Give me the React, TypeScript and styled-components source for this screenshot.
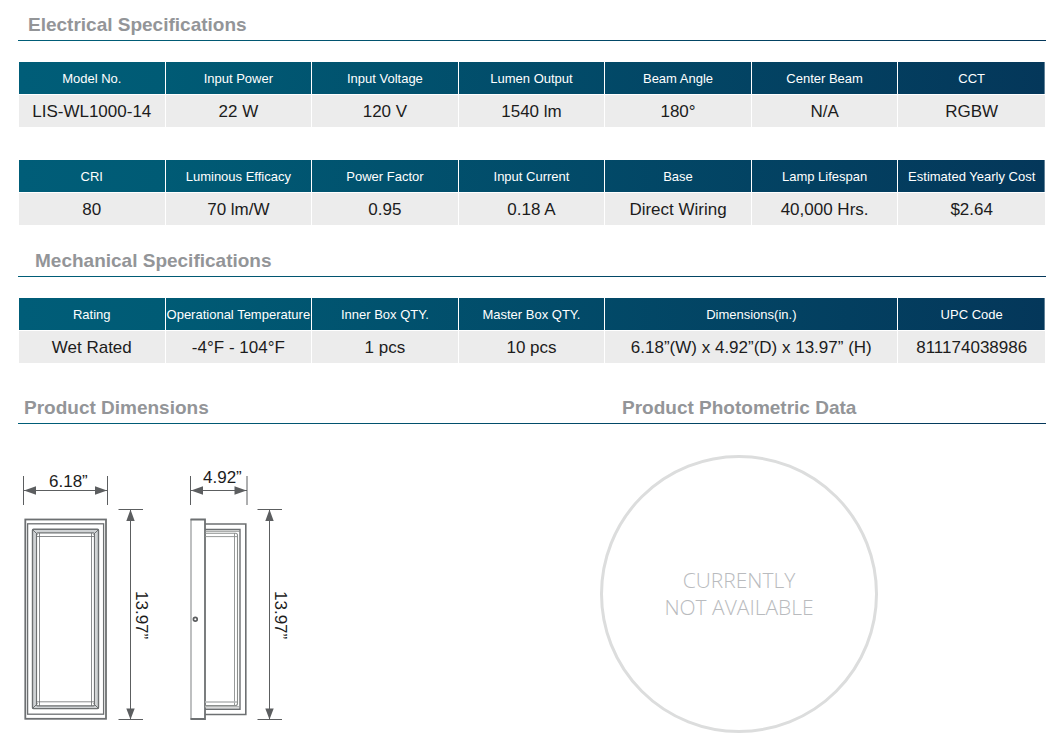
import React from "react";
import styled, { createGlobalStyle } from "styled-components";

const FONT = `"Liberation Sans", Arial, Helvetica, sans-serif`;
const GRADIENT = "linear-gradient(to right, #005d78, #005b75 14%, #04375a)";

const GlobalStyle = createGlobalStyle`
  body {
    margin: 0;
    background: #fff;
    color: #1c1c1c;
    font-family: ${FONT};
  }
`;

const Page = styled.main`
  padding: 13px 16px 19px 18px;
`;

const TitleBar = styled.header<{ $top?: number }>`
  display: grid;
  grid-template-columns: 582fr 446fr;
  margin-top: ${(p) => p.$top ?? 0}px;
  padding-bottom: 3px;
  border-bottom: 1px solid;
  border-image: ${GRADIENT} 1;
`;

const Title = styled.h2<{ $indent: number }>`
  margin: 0;
  padding-left: ${(p) => p.$indent}px;
  color: #939598;
  font-size: 19px;
  font-weight: 700;
  line-height: 24px;
  white-space: nowrap;
`;

const Tables = styled.div`
  display: flex;
  flex-direction: column;
  gap: 33px;
  padding: 21px 1px 0;
`;

const Table = styled.table`
  width: 100%;
  table-layout: fixed;
  border-collapse: separate;
  border-spacing: 0;
  text-align: center;
`;

const HeadRow = styled.tr`
  background: ${GRADIENT};
`;

const HeadCell = styled.th`
  height: 30px;
  padding: 2px 0 0;
  border-bottom: 1px solid #fff;
  color: #fff;
  font-size: 13px;
  font-weight: 400;
  line-height: 16px;
  white-space: nowrap;

  &:not(:last-child) {
    border-right: 1px solid #fff;
  }
`;

const Cell = styled.td`
  height: 30px;
  padding: 2px 0 0;
  background: #ececec;
  font-size: 17px;
  line-height: 20px;
  white-space: nowrap;

  &:not(:last-child) {
    border-right: 1px solid #fff;
  }
`;

const Figures = styled.div`
  display: grid;
  grid-template-columns: 582fr 446fr;
  align-items: start;
  padding-top: 31px;
`;

const Drawing = styled.svg`
  display: block;
  width: 300px;
  height: 278px;
  fill: none;
  stroke: #6d7072;
  font-family: ${FONT};
  font-size: 17px;

  text {
    fill: #1c1c1c;
    stroke: none;
  }
`;

const Unavailable = styled.p`
  display: flex;
  align-items: center;
  justify-content: center;
  box-sizing: border-box;
  width: 278px;
  aspect-ratio: 1;
  margin: 0;
  border: 3px solid #dcdddd;
  border-radius: 50%;
  color: #b9bbbe;
  font-family: "Open Sans", "Noto Sans", sans-serif;
  font-size: 21px;
  font-weight: 300;
  line-height: 27px;
  text-align: center;
`;

type Spec = { label: string; value: string; span?: number };

const electrical: Spec[][] = [
  [
    { label: "Model No.", value: "LIS-WL1000-14" },
    { label: "Input Power", value: "22 W" },
    { label: "Input Voltage", value: "120 V" },
    { label: "Lumen Output", value: "1540 lm" },
    { label: "Beam Angle", value: "180°" },
    { label: "Center Beam", value: "N/A" },
    { label: "CCT", value: "RGBW" },
  ],
  [
    { label: "CRI", value: "80" },
    { label: "Luminous Efficacy", value: "70 lm/W" },
    { label: "Power Factor", value: "0.95" },
    { label: "Input Current", value: "0.18 A" },
    { label: "Base", value: "Direct Wiring" },
    { label: "Lamp Lifespan", value: "40,000 Hrs." },
    { label: "Estimated Yearly Cost", value: "$2.64" },
  ],
];

const mechanical: Spec[] = [
  { label: "Rating", value: "Wet Rated" },
  { label: "Operational Temperature", value: "-4°F - 104°F" },
  { label: "Inner Box QTY.", value: "1 pcs" },
  { label: "Master Box QTY.", value: "10 pcs" },
  { label: "Dimensions(in.)", value: "6.18”(W) x 4.92”(D) x 13.97” (H)", span: 2 },
  { label: "UPC Code", value: "811174038986" },
];

function SpecTable({ specs }: { specs: Spec[] }) {
  return (
    <Table>
      <thead>
        <HeadRow>
          {specs.map((s) => (
            <HeadCell key={s.label} scope="col" colSpan={s.span}>
              {s.label}
            </HeadCell>
          ))}
        </HeadRow>
      </thead>
      <tbody>
        <tr>
          {specs.map((s) => (
            <Cell key={s.label} colSpan={s.span}>
              {s.value}
            </Cell>
          ))}
        </tr>
      </tbody>
    </Table>
  );
}

function WidthMark({ from, to }: { from: number; to: number }) {
  return (
    <g stroke="#5c5e60">
      <path d={`M${from} 476V505M${to} 476V505M${from} 490.5H${to}`} />
      <path
        fill="#5c5e60"
        stroke="none"
        d={`M${from + 0.5} 490.5l12-4.2v8.4zM${to - 0.5} 490.5l-12-4.2v8.4z`}
      />
    </g>
  );
}

function HeightMark({ x }: { x: number }) {
  return (
    <g stroke="#5c5e60">
      <path d={`M${x - 12} 509.5h24.5M${x - 12} 719.5h24.5M${x} 510V719`} />
      <path fill="#5c5e60" stroke="none" d={`M${x} 509.5l-4.2 11.5h8.4zM${x} 719.5l-4.2-11h8.4z`} />
    </g>
  );
}

function DimensionDrawing() {
  return (
    <Drawing viewBox="18 455 300 278" role="img" aria-label="Front and side view with dimensions">
      <WidthMark from={23.5} to={107.5} />
      <text x="49" y="487">6.18”</text>
      <HeightMark x={130.5} />
      <text transform="translate(136 591) rotate(90)">13.97”</text>

      {/* Front view */}
      <rect x="25.3" y="519.5" width="80.7" height="199.3" strokeWidth="1.8" />
      <rect x="27.6" y="523.8" width="76" height="190.4" strokeWidth="1.3" />
      <rect x="34.4" y="531" width="62.4" height="176.4" stroke="#d0d3d5" strokeWidth="3" />
      <rect x="32.5" y="529.3" width="66" height="179.3" rx="1" strokeWidth="1.4" />
      <rect x="36.5" y="532.8" width="58" height="173" rx="1" strokeWidth="1.2" />
      <path strokeWidth="0.8" d="M39.5 533V706M91.5 533V706M36 536.5H95M36 701.8H95" />
      <path strokeWidth="1" d="M32.5 529.5l5 5M98.5 529.5l-5 5M32.5 708.5l5-5M98.5 708.5l-5-5" />

      <WidthMark from={190.5} to={247} />
      <text x="203" y="483">4.92”</text>
      <HeightMark x={269.5} />
      <text transform="translate(275 591) rotate(90)">13.97”</text>

      {/* Side view */}
      <path stroke="#aeb0b1" strokeWidth="1.6" d="M191 519V719.5" />
      <path strokeWidth="1.8" d="M190.5 519.5H205V719H190.5" />
      <path strokeWidth="1.6" d="M205 524H245.8V714.5H205" />
      <path strokeWidth="1.4" d="M205 529.5H240V709.2H205" />
      <path stroke="#8b8f8d" strokeWidth="1.1" d="M205 533.3H235.5q2 0 2 2V703.5q0 2-2 2H205" />
      <path stroke="#8b8f8d" strokeWidth="0.9" d="M205 531.3H240M205 536.6H237M234.5 533V706" />
      <path stroke="#b4b6b6" strokeWidth="1.6" d="M205 702H237M205 706.8H239" />
      <circle cx="195.3" cy="619.3" r="1.9" stroke="#5c5e60" strokeWidth="1.7" />
    </Drawing>
  );
}

export default function App() {
  return (
    <Page>
      <GlobalStyle />
      <TitleBar>
        <Title $indent={10}>Electrical Specifications</Title>
      </TitleBar>
      <Tables>
        {electrical.map((specs) => (
          <SpecTable key={specs[0].label} specs={specs} />
        ))}
      </Tables>

      <TitleBar $top={24}>
        <Title $indent={17}>Mechanical Specifications</Title>
      </TitleBar>
      <Tables>
        <SpecTable specs={mechanical} />
      </Tables>

      <TitleBar $top={33}>
        <Title $indent={6}>Product Dimensions</Title>
        <Title $indent={22}>Product Photometric Data</Title>
      </TitleBar>
      <Figures>
        <DimensionDrawing />
        <Unavailable>
          CURRENTLY
          <br />
          NOT AVAILABLE
        </Unavailable>
      </Figures>
    </Page>
  );
}
